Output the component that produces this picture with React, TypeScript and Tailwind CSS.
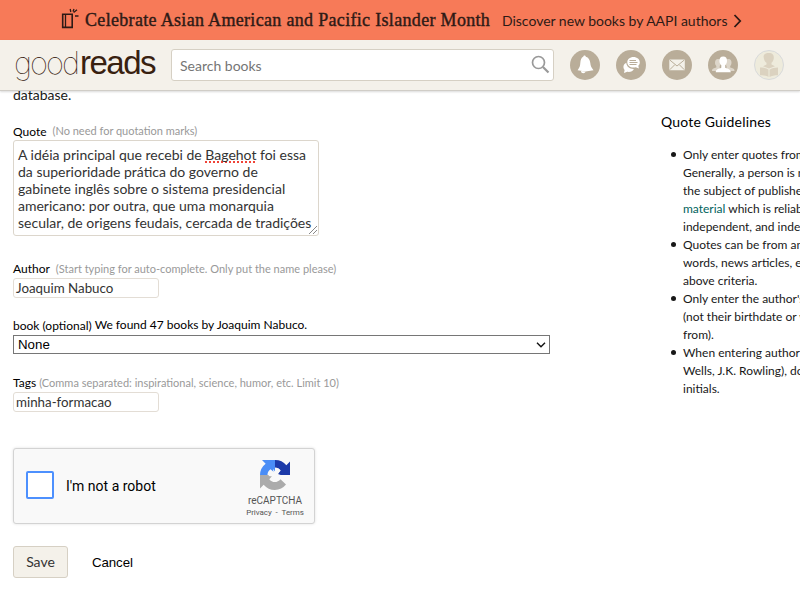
import React from "react";

const lato = "font-['Lato','Liberation_Sans',sans-serif]";

function BookIcon() {
  return (
    <svg width="18" height="22" viewBox="0 0 18 22" fill="none" stroke="#2e1a16" strokeWidth="1.6">
      <path d="M1.700 7.300H11.200V20.400H1.700Z" />
      <path d="M4.500 7.300V20.400" strokeWidth="1.3" />
      <path d="M9.200 2L9.800 5M12.600 5.600L16 2.800M14 9H17.500M12 4.400L13 2" strokeWidth="1.3" />
    </svg>
  );
}

function Bell() {
  return (
    <svg width="30" height="30" viewBox="0 0 30 30" fill="#fff">
      <path d="M14.500 5.500c.8 0 1.300.6 1.300 1.300 2.700.8 4.100 3 4.500 6.200.3 3 1 4.500 3.200 7.200L15.500 21.500 7.600 20.200c2.100-2.700 2.500-4.200 2.700-7.200.3-3.200 1-5.400 3-6.200 0-.7.4-1.300 1.200-1.300Z" />
      <path d="M11 21l4.500.6c-.2 1-1 1.700-2.200 1.700-1.300 0-2.200-1-2.300-2.300Z" />
    </svg>
  );
}

function Chat() {
  return (
    <svg width="30" height="30" viewBox="0 0 30 30">
      <path d="M10.300 12.800c-2.200 1-3.200 2.800-2.800 4.900.1 1 .6 1.700 1.100 2.300L8 23l3.200-1.200c3 .6 5.700-.6 6.700-2.900-4 .2-7.300-2-7.600-6.100Z" fill="#fff" />
      <path d="M17.500 7c3.600 0 6.300 2.300 6.300 5.300 0 1.400-.5 2.600-1.500 3.500l.6 2.600-3.100-1.100c-.7.200-1.500.3-2.300.3-3.600 0-6.200-2.300-6.200-5.300S13.900 7 17.500 7Z" fill="#fff" />
      <path d="M13.500 10.500H20M13.500 12.500H21.500M13.500 14.500H20.500" stroke="#b9ad99" strokeWidth="1" />
    </svg>
  );
}

function Mail() {
  return (
    <svg width="30" height="30" viewBox="0 0 30 30">
      <rect x="7.300" y="9.500" width="15.500" height="10.700" rx=".5" fill="#f4f1ea" />
      <path d="M7.800 10l7.200 6 7.300-6M7.800 19.700l5-5M22.300 19.700l-5-5" fill="none" stroke="#b9ad99" strokeWidth="1" />
    </svg>
  );
}

function People() {
  return (
    <svg width="30" height="30" viewBox="0 0 30 30">
      <g fill="#ddd6ca">
        <path d="M10 9c2.200 0 3.200 1.500 3 3.700-.2 1.800-.8 2.600-1.300 3.300v2l1.300 3H4c0-1.800.8-2.300 2.600-2.900l1.700-.6V16c-.7-.7-1.300-1.700-1.300-3.200C7 10.500 8 9 10 9ZM20.500 9c2 0 3 1.500 3 3.700 0 1.600-.6 2.600-1.300 3.300v1.500l1.700.6c1.800.6 2.600 1.100 2.600 2.900H17l1.500-3v-2c-.6-.7-1.200-1.500-1.300-3.300-.2-2.200 1-3.700 3.300-3.700Z" />
      </g>
      <path d="M15.200 6.500c2.800 0 4 1.800 3.800 4.500-.1 2-.9 3.400-1.800 4.300v2.400c2.800 1.100 5.300 1.300 5.600 4.500H7.700c.3-3.200 2.700-3.400 5.600-4.500v-2.400c-1-.9-1.800-2.300-1.900-4.300-.2-2.700 1.100-4.500 3.800-4.500Z" fill="#fff" />
    </svg>
  );
}

function Reader() {
  return (
    <svg width="30" height="30" viewBox="0 0 30 30" fill="#dbd2c0">
      <path d="M10 5c1-1.500 2.500-2 4.800-2 3.800 0 5.300 2 5 5-.1 2.200-1.100 3.900-2.300 4.700v1.800l3.500 1.700-6 2.300-6-2.300 3.500-1.700v-1.800c-1.500-.9-2.300-2.500-2.600-4.200-.2-1.300-.6-2.500.1-3.500Z" />
      <path d="M6 17.500c3.500 0 6.500.7 8.500 2.300V27c-2-1.300-5-1.800-8.500-1.800ZM24 17.500c-3.500 0-6.500.7-8.500 2.300V27c2-1.300 5-1.800 8.500-1.800Z" />
    </svg>
  );
}

function Circle({ children }: { children: React.ReactNode }) {
  return <div className="size-[30px] overflow-hidden rounded-full bg-[#b9ad99]">{children}</div>;
}

function Recaptcha() {
  return (
    <svg width="32" height="32" viewBox="0 0 64 64">
      <path d="M62 31.900V5l-7.300 7.300A29 29 0 0 0 32 2v15c5 0 8.600 1.800 11.500 6L36 31.900Z" fill="#1c3aa9" />
      <path d="M32 2H6l7.300 7.300A29 29 0 0 0 2 32h15c0-5 1.800-8.700 6-11.500l9 7.500Z" fill="#4a8df6" />
      <path d="M2 32v27l7.300-7.300A29 29 0 0 0 54 51L43 40.500C37 48 26 48 20.500 40.500L28 32Z" fill="#ababab" />
      <path d="M28 20l5 6 6-7 3 4-4 7 8 3-3 6-8-3-3 7-7-2 2-6-8-1 3-7 7 1Z" fill="#f9f9f9" />
    </svg>
  );
}

function Hint({ children }: { children: React.ReactNode }) {
  return <span className="text-[11px] text-[#999]">{children}</span>;
}

function Banner() {
  return (
    <div className="flex h-10 items-center bg-[#f77a58] pl-[61px] text-[#2e1a16]">
      <div className="-mt-1 w-6 shrink-0"><BookIcon /></div>
      <span className="w-[417px] shrink-0 whitespace-nowrap font-['Liberation_Serif',serif] text-[18px] tracking-[0.32px] [-webkit-text-stroke:0.4px_#2e1a16]">
        Celebrate Asian American and Pacific Islander Month
      </span>
      <span className="w-[231px] shrink-0 whitespace-nowrap font-['Lato',sans-serif] text-[14px] tracking-[-0.020px]">
        Discover new books by AAPI authors
      </span>
      <svg className="mt-px" width="9" height="14" viewBox="0 0 9 14" fill="none" stroke="#2e1a16" strokeWidth="1.8"><path d="M1.500 1l5.700 6-5.700 6" /></svg>
    </div>
  );
}

function Nav() {
  return (
    <div className="flex h-[51px] items-center border-b border-[#d0cdc7] bg-[#f4f1ea] pl-[14px] shadow-[0_1px_2px_rgba(0,0,0,0.15)]">
      <div className="-mt-1 flex w-[157px] shrink-0 items-baseline whitespace-nowrap text-[33px] leading-[32px] text-[#382110]">
        <span className="w-[66px] font-['Inter',sans-serif] text-[31px] font-thin tracking-[-2px]">good</span>
        <span className="font-['Liberation_Sans',sans-serif] tracking-[-1.500px]">reads</span>
      </div>
      <div className="flex h-8 w-[383px] shrink-0 items-center justify-between rounded-[3px] border border-[#d6d0c4] bg-white pr-[3px] pl-2 text-[14px] text-[#757575]">
        <span>Search books</span>
        <svg width="19" height="20" viewBox="0 0 19 20" fill="none" stroke="#999"><circle cx="7.500" cy="7.500" r="6" strokeWidth="1.700" /><path d="M12 12l5.500 5.500" strokeWidth="2.200" /></svg>
      </div>
      <div className="ml-4 flex gap-4">
        <Circle><Bell /></Circle>
        <Circle><Chat /></Circle>
        <Circle><Mail /></Circle>
        <Circle><People /></Circle>
        <div className="size-[30px] overflow-hidden rounded-full border border-[#d8dadb] bg-[#eeebdc]"><div className="-m-px"><Reader /></div></div>
      </div>
    </div>
  );
}

function QuoteForm() {
  return (
    <div className="w-[648px] shrink-0 pl-[13px] text-[12px] leading-[18px] text-black">
      <p className="h-[31px] text-[14px] leading-[8px] text-[#181818]">database.</p>
      <div className="flex h-[18px] items-center gap-[6px] whitespace-nowrap"><span className="pt-px">Quote</span><Hint>(No need for quotation marks)</Hint></div>
      <div className="relative h-[96px] w-[306px] overflow-hidden rounded-[3px] border border-[#dcd6cc] pt-[5px] pl-1 text-[14px] leading-[17px] whitespace-nowrap text-[#333]">
        <div>A idéia principal que recebi de <span className="underline decoration-[#f04438] decoration-dotted decoration-2 underline-offset-[1px] [text-decoration-skip-ink:none]">Bagehot</span> foi essa</div>
        <div>da superioridade prática do governo de</div>
        <div>gabinete inglês sobre o sistema presidencial</div>
        <div>americano: por outra, que uma monarquia</div>
        <div>secular, de origens feudais, cercada de tradições</div>
        <svg className="absolute right-px bottom-px" width="8" height="8" stroke="#888"><path d="M0 8L8 0M4 8L8 4" /></svg>
      </div>
      <div className="mt-6 flex h-[17px] items-center gap-[6px] whitespace-nowrap"><span>Author</span><Hint>(Start typing for auto-complete. Only put the name please)</Hint></div>
      <div className="mt-px flex h-5 w-[146px] items-center rounded-[3px] border border-[#e3ddd5] pl-[2px] text-[13.333px] whitespace-nowrap text-[#333]">Joaquim Nabuco</div>
      <div className="mt-[17px] flex h-[19px] items-center gap-[3px] whitespace-nowrap"><span className="relative top-px">book (optional)</span><span>We found 47 books by Joaquim Nabuco.</span></div>
      <div className="mt-px flex h-[19px] w-[537px] items-center justify-between border border-[#767676] pr-[3px] pl-1 font-['Liberation_Sans',sans-serif] text-[13.300px]">
        <span>None</span>
        <svg width="10" height="6" viewBox="0 0 10 6" fill="none" stroke="#111" strokeWidth="1.400"><path d="M1 .7l4 4 4-4" /></svg>
      </div>
      <div className="mt-5 flex h-[17px] items-center gap-[3px] whitespace-nowrap"><span>Tags</span><Hint>(Comma separated: inspirational, science, humor, etc. Limit 10)</Hint></div>
      <div className="mt-px flex h-5 w-[146px] items-center rounded-[3px] border border-[#e3ddd5] pl-[2px] text-[13.333px] whitespace-nowrap text-[#333]">minha-formacao</div>
      <div className="mt-9 flex h-[76px] w-[302px] items-center rounded-[3px] border border-[#d3d3d3] bg-[#f9f9f9] pl-3 font-['Roboto',sans-serif] shadow-[0_0_3px_rgba(0,0,0,0.12)]">
        <div className="-mt-[3px] size-7 rounded-[2px] border-2 border-[#4d90fe] bg-white" />
        <span className="ml-3 w-[172px] pb-px text-[14px]">I'm not a robot</span>
        <div className="flex w-[74px] flex-col items-center pt-[5px] text-[#555]">
          <Recaptcha />
          <span className="mt-1 text-[10px] leading-[12px]">reCAPTCHA</span>
          <span className="text-[8px] leading-[11px] tracking-[-0.050px]">Privacy&nbsp; - &nbsp;Terms</span>
        </div>
      </div>
      <div className="mt-[22px] flex items-center">
        <div className="flex h-8 w-[55px] items-center justify-center rounded-[3px] border border-[#d6d0c4] bg-[#f4f1ea] text-[14px] text-[#333]">Save</div>
        <span className="ml-6 pt-px font-['Liberation_Sans',sans-serif] text-[13.300px] tracking-[-0.100px]">Cancel</span>
      </div>
    </div>
  );
}

const guidelines: React.ReactNode[][] = [
  ["Only enter quotes from", "Generally, a person is n", "the subject of published", <><span className="text-[#00635d]">material</span> which is reliab</>, "independent, and inde"],
  ["Quotes can be from an", "words, news articles, e", "above criteria."],
  ["Only enter the author's", "(not their birthdate or w", "from)."],
  ["When entering author", "Wells, J.K. Rowling), do", "initials."],
];

function Guidelines() {
  return (
    <aside className="w-[152px] shrink-0 overflow-hidden pl-[13px] text-[#181818]">
      <h2 className="mt-[22px] text-[14px] leading-[18px] tracking-[0.180px] text-black">Quote Guidelines</h2>
      <ul className="mt-[15px] text-[12px] leading-[18px] whitespace-nowrap">
        {guidelines.map((item, i) => (
          <li key={i} className="flex">
            <span className="mt-[6px] mr-[7px] ml-[10px] size-[5px] shrink-0 rounded-full bg-[#181818]" />
            <div>{item.map((line, j) => <div key={j}>{line}</div>)}</div>
          </li>
        ))}
      </ul>
    </aside>
  );
}

export default function App() {
  return (
    <div className={`h-[600px] w-[800px] overflow-hidden bg-white ${lato}`}>
      <header className="relative"><Banner /><Nav /></header>
      <main className="flex"><QuoteForm /><Guidelines /></main>
    </div>
  );
}
